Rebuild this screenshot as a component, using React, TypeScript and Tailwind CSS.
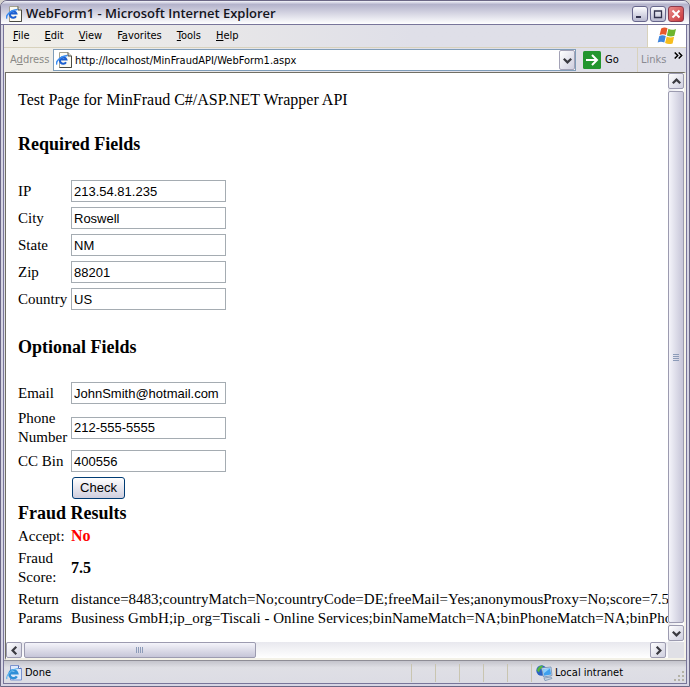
import React from 'react';

const ui = 'whitespace-nowrap text-[#000]';

function PageIcon({ className }: { className?: string }) {
  return (
    <svg viewBox="0 0 16 16" className={className} aria-hidden="true">
      <path d="M3.500 0.500h8.500l3.500 3.500v11.500h-12z" fill="#fbfaf2" stroke="#a3a190" />
      <path d="M12 0.500v3.500h3.500" fill="#dcdad0" stroke="#4a4a42" />
      <path d="M15.500 4v11.500h-12" fill="none" stroke="#4a4a42" />
      <path d="M10 10.200A3.300 3.300 0 1 1 10.400 7.600H4.800" fill="none" stroke="#1c5fd0" strokeWidth="2" />
      <path d="M1 12.500C-0.800 10.500 3.500 4 11.500 3.400" fill="none" stroke="#3a8cf0" strokeWidth="1.500" />
    </svg>
  );
}

function StatusIcon() {
  return (
    <svg viewBox="0 0 16 16" className="size-4 shrink-0" aria-hidden="true">
      <path d="M4.500 0.500h8l3 3v11.500h-11z" fill="#dfe9fb" stroke="#7b93cf" />
      <path d="M12.500 0.500v3h3" fill="#fff" stroke="#5873b8" />
      <path d="M10.800 11.300A4 4 0 1 1 11.300 8.300H4.500" fill="none" stroke="#2f8fd8" strokeWidth="2.400" />
      <path d="M1 14C-0.500 11 5 4 12 3.500" fill="none" stroke="#5bb4ee" strokeWidth="1.200" />
    </svg>
  );
}

function IntranetIcon() {
  return (
    <svg viewBox="0 0 17 16" className="h-4 w-[17px] shrink-0" aria-hidden="true">
      <circle cx="5.500" cy="5.500" r="5.200" fill="#2b62c4" />
      <path d="M1.500 3.500q2-3.500 5.500-3l-1 3-2 1-1 3-2-2z" fill="#56b83e" />
      <path d="M5.500 3l9.500-1 1 8.500-8.500 1.500z" fill="#d9e4f2" stroke="#6f8cb0" strokeWidth="0.800" />
      <path d="M6.800 4.200l7.400-1 0.900 6.300-7 1.200z" fill="#3fa0ee" />
      <path d="M6.800 4.200l7.400-1-6.600 5.400z" fill="#8fd0fb" />
      <path d="M8 13l7-1 1 1.500-7 2.200z" fill="#c9d3e0" stroke="#6f8cb0" strokeWidth="0.700" />
    </svg>
  );
}

function WindowsFlag() {
  return (
    <svg viewBox="0 0 20 18" className="h-[18px] w-5" aria-hidden="true">
      <path d="M4.200 1.500Q7.500-0.500 10.500 1.300L9 8Q6 6.300 2.600 8z" fill="#e8592b" />
      <path d="M11.400 1.800Q14.500 3.700 19 1.900L17.400 8.700Q13.500 10.200 9.900 8.400z" fill="#6cb52d" />
      <path d="M2.300 9Q5.500 7.400 8.800 9.100L7.300 15.600Q4 14 0.700 15.600z" fill="#3f86dd" />
      <path d="M9.700 9.500Q13 11.300 17.100 9.800L15.600 16.400Q11.500 18 8.100 16z" fill="#f6bd1c" />
    </svg>
  );
}

function Chevron({ d }: { d: string }) {
  return (
    <svg viewBox="0 0 9 9" className="size-[9px]" aria-hidden="true">
      <path d={d} fill="none" stroke="#3a3a40" strokeWidth="2.200" />
    </svg>
  );
}

const chevrons = {
  up: 'M0.800 6.300L4.500 2.600 8.200 6.300',
  down: 'M0.800 2.700L4.500 6.400 8.200 2.700',
  left: 'M6.300 0.800L2.600 4.500 6.300 8.200',
  right: 'M2.700 0.800L6.400 4.500 2.700 8.200',
};

function ScrollButton({ dir }: { dir: keyof typeof chevrons }) {
  return (
    <button
      type="button"
      aria-label={'Scroll ' + dir}
      className="flex size-4 shrink-0 items-center justify-center rounded-[2px] border border-[#9c9bb0] bg-linear-to-br from-white to-[#cfcfdf]"
    >
      <Chevron d={chevrons[dir]} />
    </button>
  );
}

function CaptionButton({ label, close, children }: { label: string; close?: boolean; children: React.ReactNode }) {
  return (
    <button
      type="button"
      aria-label={label}
      className={
        'flex size-4 items-center justify-center rounded-[3px] border ' +
        (close
          ? 'border-[#8c3a4c] bg-linear-to-br from-[#e88a8a] to-[#c8343c]'
          : 'border-[#67668c] bg-linear-to-b from-[#fdfdff] to-[#b9b9d0]')
      }
    >
      <svg viewBox="0 0 14 14" className="size-[14px]" aria-hidden="true">
        {children}
      </svg>
    </button>
  );
}

function MenuItem({ before = '', letter, after }: { before?: string; letter: string; after: string }) {
  return (
    <button type="button" className={ui}>
      {before}
      <span className="underline underline-offset-1">{letter}</span>
      {after}
    </button>
  );
}

function Field({ id, label, value, tall }: { id: string; label: string; value: string; tall?: boolean }) {
  return (
    <div className={'grid grid-cols-[50px_1fr] items-center gap-x-[3px] ' + (tall ? 'h-[37px]' : 'h-[23px]')}>
      <label htmlFor={id} className="text-[15px] leading-[19px]">
        {label}
      </label>
      <input
        id={id}
        type="text"
        defaultValue={value}
        className="mb-px h-[22px] w-[155px] border border-[#a5acb2] bg-white px-[2px] font-['Liberation_Sans',Arial,sans-serif] text-[13px] outline-none"
      />
    </div>
  );
}

function Result({ label, children }: { label: string; children: React.ReactNode }) {
  return (
    <div className="grid grid-cols-[50px_1fr] items-center gap-x-[3px] text-[15px] leading-[19px]">
      <dt>{label}</dt>
      <dd className="whitespace-nowrap">{children}</dd>
    </div>
  );
}

export default function App() {
  return (
    <div className="h-screen bg-[#d6d3ce] font-['DejaVu_Sans_Condensed','Noto_Sans',sans-serif] text-[11px] text-black">
      <div className="flex h-full flex-col overflow-hidden rounded-t-[7px] border border-[#6b6785] bg-[#d6d5e4]">
        <header className="flex h-6 shrink-0 items-center gap-1 border-b border-[#78759a] bg-linear-to-b from-[#f4f4fa] via-[#b4b3cb] via-15% to-white pt-[3px] pr-[5px] pl-[5px]">
          <PageIcon className="size-4" />
          <h1 className="flex-1 truncate font-['Open_Sans','Noto_Sans',sans-serif] text-[13px] font-semibold text-[#14141c]">
            WebForm1 - Microsoft Internet Explorer
          </h1>
          <div className="flex gap-[2px]">
            <CaptionButton label="Minimize">
              <path d="M3 9h5v2H3z" fill="#33334e" />
            </CaptionButton>
            <CaptionButton label="Maximize">
              <path d="M3.500 4h7v6.500h-7zM3 4h8" fill="none" stroke="#33334e" strokeWidth="1.300" />
            </CaptionButton>
            <CaptionButton label="Close" close>
              <path d="M3.500 3.500l7 7M10.500 3.500l-7 7" stroke="#fff" strokeWidth="2" />
            </CaptionButton>
          </div>
        </header>

        <div className="mx-[2px] mb-[2px] flex min-h-0 flex-1 flex-col border-x border-b border-[#78759a] bg-[#e0e0e8]">
          <nav className="flex h-[23px] shrink-0 items-stretch border-b border-[#d8d2bd] bg-linear-to-r from-[#f1efe8] to-[#dfdfe8] to-60%">
            <div className="flex flex-1 items-center gap-[15px] pl-[9px]">
              <MenuItem letter="F" after="ile" />
              <MenuItem letter="E" after="dit" />
              <MenuItem letter="V" after="iew" />
              <MenuItem before="F" letter="a" after="vorites" />
              <MenuItem letter="T" after="ools" />
              <MenuItem letter="H" after="elp" />
            </div>
            <div className="flex w-[39px] items-center justify-center border-l border-[#d8d2bd] bg-white">
              <WindowsFlag />
            </div>
          </nav>

          <div className="flex h-6 shrink-0 items-center bg-linear-to-r from-[#f1efe8] to-[#dfdfe8] to-60% pl-[6px]">
            <label htmlFor="address" className="w-[43px] text-[#8a8a86]">
              A<span className="underline underline-offset-1">d</span>dress
            </label>
            <div className="flex h-[22px] flex-1 items-center gap-[3px] border border-[#7f9db9] bg-white pl-[2px]">
              <PageIcon className="size-4" />
              <input
                id="address"
                type="text"
                defaultValue="http://localhost/MinFraudAPI/WebForm1.aspx"
                className="min-w-0 flex-1 bg-transparent pt-[2px] outline-none"
              />
              <button
                type="button"
                aria-label="Show address list"
                className="flex h-5 w-4 items-center justify-center rounded-[2px] border border-[#a3a2b6] bg-linear-to-br from-white to-[#cfcfdf]"
              >
                <Chevron d={chevrons.down} />
              </button>
            </div>
            <button type="button" className="flex w-[61px] items-center gap-1 pl-[7px]">
              <svg viewBox="0 0 18 18" className="size-[18px]" aria-hidden="true">
                <rect width="18" height="18" rx="1.500" fill="#23962f" />
                <path d="M3 9h11M9 4l5 5-5 5" fill="none" stroke="#fff" strokeWidth="2" />
              </svg>
              Go
            </button>
            <div className="flex h-full w-[49px] justify-between border-l border-[#d8d2bd] pr-[3px] pl-[3px]">
              <span className="self-center text-[#8a8a92]">Links</span>
              <svg viewBox="0 0 9 7" className="mt-1 h-[7px] w-[9px]" aria-hidden="true">
                <path d="M0.700 0.500l3 3-3 3M4.700 0.500l3 3-3 3" fill="none" stroke="#000" strokeWidth="1.500" />
              </svg>
            </div>
          </div>

          <div className="ml-px grid min-h-0 flex-1 grid-cols-[1fr_16px] grid-rows-[1fr_16px] border-t border-r-2 border-b-2 border-l border-t-[#716f64] border-r-[#f4f2e8] border-b-[#f4f2e8] border-l-[#716f64] bg-white">
            <main className="overflow-hidden bg-white pt-[17px] pl-3 font-['Liberation_Serif','Times_New_Roman',serif] text-[16px] leading-[19px]">
              <p>Test Page for MinFraud C#/ASP.NET Wrapper API</p>
              <h2 className="mt-6 text-[18px] leading-[22px] font-bold">Required Fields</h2>
              <div className="mt-[25px] flex flex-col gap-1">
                <Field id="ip" label="IP" value="213.54.81.235" />
                <Field id="city" label="City" value="Roswell" />
                <Field id="state" label="State" value="NM" />
                <Field id="zip" label="Zip" value="88201" />
                <Field id="country" label="Country" value="US" />
              </div>
              <h2 className="mt-[25px] text-[18px] leading-[22px] font-bold">Optional Fields</h2>
              <div className="mt-6 flex flex-col gap-1">
                <Field id="email" label="Email" value="JohnSmith@hotmail.com" />
                <Field id="phone" label="Phone Number" value="212-555-5555" tall />
                <Field id="ccbin" label="CC Bin" value="400556" />
              </div>
              <button
                type="button"
                className="mt-1 ml-[54px] block h-[22px] w-[53px] rounded-[3px] border border-[#003c74] bg-linear-to-b from-white to-[#cfcede] font-['Liberation_Sans',Arial,sans-serif] text-[13px] leading-[20px]"
              >
                Check
              </button>
              <h2 className="mt-[3px] text-[18px] leading-[22px] font-bold">Fraud Results</h2>
              <dl className="mt-[2px] flex flex-col gap-[3px]">
                <Result label="Accept:">
                  <b className="text-[16px] text-[#ff0000]">No</b>
                </Result>
                <Result label="Fraud Score:">
                  <b className="text-[16px]">7.5</b>
                </Result>
                <Result label="Return Params">
                  distance=8483;countryMatch=No;countryCode=DE;freeMail=Yes;anonymousProxy=No;score=7.5
                  <br />
                  Business GmbH;ip_org=Tiscali - Online Services;binNameMatch=NA;binPhoneMatch=NA;binPhone=NA
                </Result>
              </dl>
            </main>

            <div className="flex flex-col items-stretch gap-[2px] bg-linear-to-r from-[#e8e8ee] to-white pb-px">
              <ScrollButton dir="up" />
              <div className="flex flex-1 flex-col items-center justify-center gap-px rounded-[2px] border border-[#9c9bb0] bg-linear-to-r from-[#f4f4fa] to-[#c6c5d8]">
                <i className="h-px w-[6px] bg-[#8c9bb8]" />
                <i className="h-px w-[6px] bg-[#8c9bb8]" />
                <i className="h-px w-[6px] bg-[#8c9bb8]" />
                <i className="h-px w-[6px] bg-[#8c9bb8]" />
              </div>
              <ScrollButton dir="down" />
            </div>

            <div className="flex items-center justify-between bg-linear-to-b from-[#e8e8ee] to-white pr-[2px]">
              <div className="flex flex-1 gap-[2px]">
                <ScrollButton dir="left" />
                <div className="flex h-4 w-[36%] items-center justify-center gap-px rounded-[2px] border border-[#9c9bb0] bg-linear-to-b from-[#f4f4fa] to-[#c6c5d8]">
                  <i className="h-[6px] w-px bg-[#8c9bb8]" />
                  <i className="h-[6px] w-px bg-[#8c9bb8]" />
                  <i className="h-[6px] w-px bg-[#8c9bb8]" />
                  <i className="h-[6px] w-px bg-[#8c9bb8]" />
                </div>
              </div>
              <ScrollButton dir="right" />
            </div>
            <div className="bg-[#e0e0e6]" />
          </div>

          <footer className="flex h-[23px] shrink-0 items-center border-t border-[#8e8d96] bg-linear-to-b from-[#c4c4cc] via-[#dfdfe5] via-30% to-[#dcdce4] pt-[2px] pl-[2px]">
            <StatusIcon />
            <span className="ml-[3px] flex-1">Done</span>
            <span className="h-[18px] w-6 border-l border-[#c9c5b0]" />
            <span className="h-[18px] w-6 border-l border-[#c9c5b0]" />
            <span className="h-[18px] w-6 border-l border-[#c9c5b0]" />
            <span className="h-[18px] w-6 border-l border-[#c9c5b0]" />
            <span className="h-[18px] w-6 border-l border-[#c9c5b0]" />
            <div className="flex h-[18px] w-[143px] items-center gap-[2px] border-l border-[#c9c5b0] pl-1">
              <IntranetIcon />
              <span className={ui}>Local intranet</span>
            </div>
            <svg viewBox="0 0 12 12" className="size-3 self-end" aria-hidden="true">
              <path d="M8 0h2v2H8zM4 4h2v2H4zM8 4h2v2H8zM0 8h2v2H0zM4 8h2v2H4zM8 8h2v2H8z" fill="#b4b2a6" />
            </svg>
          </footer>
        </div>
      </div>
    </div>
  );
}
